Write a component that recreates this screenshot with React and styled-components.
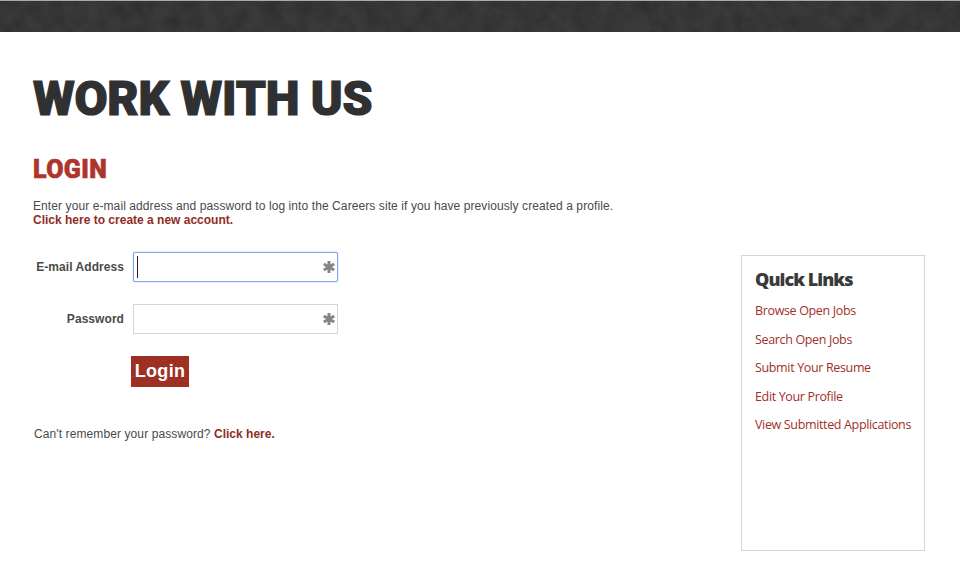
import styled, { createGlobalStyle } from "styled-components";

const GlobalStyle = createGlobalStyle`
    html, body { margin: 0; padding: 0; background: #fff; }
    body { font-family: "Liberation Sans", Arial, sans-serif; font-size: 12px; color: #4a4a4a; }
`;

const links = [
    "Browse Open Jobs",
    "Search Open Jobs",
    "Submit Your Resume",
    "Edit Your Profile",
    "View Submitted Applications",
];

function Grain({ id, frequency, opacity }) {
    return (
        <GrainSvg aria-hidden="true">
            <filter id={id}>
                <feTurbulence type="fractalNoise" baseFrequency={frequency} numOctaves="4" seed="7" />
                <feColorMatrix values="0 0 0 0 0  0 0 0 0 0  0 0 0 0 0  1.4 0 0 0 -0.45" />
            </filter>
            <rect width="100%" height="100%" filter={`url(#${id})`} opacity={opacity} />
        </GrainSvg>
    );
}

function Field({ label, type, focused }) {
    return (
        <FieldRow>
            <FieldLabel>{label}</FieldLabel>
            <InputWrap>
                <TextInput type={type} $focused={focused} readOnly />
                {focused && <Caret />}
                <Required viewBox="0 0 12 12" aria-hidden="true">
                    <path d="M6 0v12M.8 3l10.4 6M11.2 3L.8 9" />
                </Required>
            </InputWrap>
        </FieldRow>
    );
}

export default function App() {
    return (
        <>
            <GlobalStyle />
            <TopBar>
                <Grain id="barGrain" frequency="0.06" opacity="0.25" />
            </TopBar>
            <Page>
                <Title>WORK WITH US</Title>
                <Columns>
                    <Main>
                        <SectionTitle>LOGIN</SectionTitle>
                        <Intro>
                            Enter your e-mail address and password to log into the Careers site if you have previously created a profile.
                            <br />
                            <StrongLink href="#">Click here to create a new account.</StrongLink>
                        </Intro>
                        <Form onSubmit={(e) => e.preventDefault()}>
                            <Field label="E-mail Address" type="text" focused />
                            <Field label="Password" type="password" />
                            <LoginButton type="submit">
                                <Grain id="btnGrain" frequency="0.5" opacity="0.18" />
                                <span>Login</span>
                            </LoginButton>
                        </Form>
                        <Forgot>
                            Can't remember your password? <StrongLink href="#">Click here.</StrongLink>
                        </Forgot>
                    </Main>
                    <Sidebar>
                        <SidebarTitle>Quick Links</SidebarTitle>
                        <LinkList>
                            {links.map((l) => (
                                <li key={l}><QuickLink href="#">{l}</QuickLink></li>
                            ))}
                        </LinkList>
                    </Sidebar>
                </Columns>
            </Page>
        </>
    );
}

const TopBar = styled.div`
    position: relative;
    height: 31px;
    background: #3a3a3a;
    border-top: 1px solid #a9a9a9;
    overflow: hidden;
`;

const GrainSvg = styled.svg`
    position: absolute;
    inset: 0;
    width: 100%;
    height: 100%;
`;

const Page = styled.div`
    padding: 42px 35px 0 33px;
`;

const Title = styled.h1`
    margin: 0;
    font-family: Roboto, sans-serif;
    font-weight: 900;
    font-size: 48px;
    line-height: 50px;
    letter-spacing: -0.25px;
    -webkit-text-stroke: 1.2px #2f3032;
    color: #2f3032;
`;

const Columns = styled.div`
    display: flex;
    justify-content: space-between;
    align-items: flex-start;
`;

const Main = styled.div`
    width: 640px;
    padding-top: 31px;
`;

const SectionTitle = styled.h2`
    margin: 0;
    font-family: Roboto, sans-serif;
    font-weight: 900;
    font-size: 25px;
    line-height: 30px;
    letter-spacing: 0.4px;
    -webkit-text-stroke: 0.6px #ad352b;
    color: #ad352b;
`;

const Intro = styled.p`
    margin: 14px 0 0;
    line-height: 14px;
    letter-spacing: 0.09px;
`;

const StrongLink = styled.a`
    font-weight: bold;
    letter-spacing: 0;
    color: #8f2d25;
    text-decoration: none;
`;

const Form = styled.form`
    display: flex;
    flex-direction: column;
    margin-top: 25px;
`;

const FieldRow = styled.div`
    display: flex;
    align-items: center;
    gap: 9px;
    margin-bottom: 22px;
`;

const FieldLabel = styled.label`
    width: 91px;
    text-align: right;
    font-weight: bold;
    letter-spacing: 0.06px;
    white-space: nowrap;
`;

const InputWrap = styled.div`
    position: relative;
    width: 205px;
    height: 30px;
`;

const TextInput = styled.input`
    box-sizing: border-box;
    display: block;
    width: 100%;
    height: 100%;
    margin: 0;
    padding: 0 4px;
    outline: none;
    border-radius: ${(p) => (p.$focused ? "2px" : "0")};
    border: 1px solid ${(p) => (p.$focused ? "#7fa6e6" : "#d6d6d6")};
    box-shadow: ${(p) => (p.$focused ? "0 0 2px #a9c4f0" : "none")};
    background: #fff;
`;

const Caret = styled.span`
    position: absolute;
    left: 4px;
    top: 4px;
    width: 1px;
    height: 22px;
    background: #222;
`;

const Required = styled.svg`
    position: absolute;
    right: 3px;
    top: 9px;
    width: 12px;
    height: 12px;
    fill: none;
    stroke: #858585;
    stroke-width: 3;
`;

const LoginButton = styled.button`
    position: relative;
    align-self: flex-start;
    width: 58px;
    height: 31px;
    margin: 0 0 0 98px;
    padding: 0;
    border: none;
    overflow: hidden;
    background: #a63325;
    color: #fff;
    font-family: "Liberation Sans", Arial, sans-serif;
    font-weight: bold;
    font-size: 18px;
    letter-spacing: 0.3px;
    cursor: pointer;

    & > span {
        position: relative;
    }
`;

const Forgot = styled.p`
    margin: 40px 0 0 1px;
    line-height: 14px;
    letter-spacing: 0.1px;
`;

const Sidebar = styled.aside`
    box-sizing: border-box;
    width: 184px;
    height: 296px;
    margin-top: 131px;
    padding: 11px 12px 0 13px;
    border: 1px solid #d6d6d6;
`;

const SidebarTitle = styled.h3`
    margin: 0;
    font-family: "Open Sans", sans-serif;
    font-weight: 800;
    font-size: 18px;
    line-height: 24px;
    letter-spacing: -0.95px;
    color: #3a3a3a;
`;

const LinkList = styled.ul`
    list-style: none;
    margin: 11px 0 0;
    padding: 0;

    & > li {
        height: 28.5px;
        line-height: 18px;
        white-space: nowrap;
    }
`;

const QuickLink = styled.a`
    font-family: "Open Sans", sans-serif;
    font-size: 12.5px;
    letter-spacing: -0.35px;
    color: #a0302a;
    text-decoration: none;
`;
